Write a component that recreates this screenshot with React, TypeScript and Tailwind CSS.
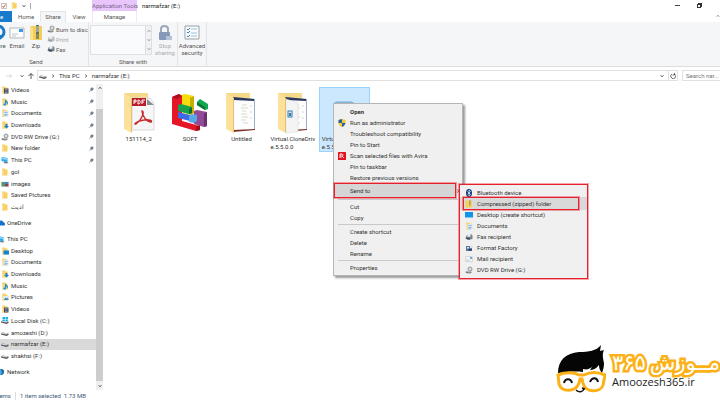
import type { ReactNode } from "react";

type IconName =
  | "folder" | "video" | "music" | "doc" | "download" | "dvd" | "pc" | "images"
  | "cloud" | "desktop" | "pictures" | "disk" | "drive" | "network"
  | "bluetooth" | "zip" | "screen" | "fax" | "factory" | "mail" | "shield" | "avira";

const folderBase = (
  <>
    <path d="M2 1h6l1 2h4v12H2z" fill="#f8cf62" />
    <path d="M2 2l3 1v12H2z" fill="#fbe09a" />
  </>
);

const discDrive = (
  <>
    <ellipse cx="10" cy="6" rx="5" ry="5" fill="#a9adb0" />
    <ellipse cx="10" cy="6" rx="2" ry="2" fill="#eef0f1" />
    <path d="M1 11l7-1 6 2-4 3-8-1z" fill="#6d7174" />
    <path d="M1 11l7-1 6 2-6 1z" fill="#c3c6c8" />
  </>
);

const hardDrive = (
  <>
    <path d="M0 9l3-2 12 2v3l-4 2L0 11z" fill="#55595c" />
    <path d="M0 9l3-2 12 2-4 2z" fill="#d3d5d7" />
  </>
);

const shapes: Record<IconName, ReactNode> = {
  folder: folderBase,
  video: (<>{folderBase}<path d="M6 5h9v10H6z" fill="#454a50" /><path d="M8 6h5v3H8zM8 11h5v3H8z" fill="#7f8fb3" /></>),
  music: (<>{folderBase}<path d="M9 3c1 3 5 3 5 7 0 2-1 3-2 4 1-4-1-4-2-5v4c0 3-5 3-5 0s3-2 3-2V3z" fill="#1593e6" /></>),
  doc: (<>{folderBase}<path d="M5 4h10v11H5z" fill="#d7e6f2" /><path d="M7 7h6v1H7zM7 10h6v1H7zM7 12h4v1H7z" fill="#4d90c4" /></>),
  download: (<>{folderBase}<path d="M9 6h4v4h3l-5 5-5-5h3z" fill="#1583d8" /></>),
  dvd: discDrive,
  pc: (<><path d="M1 2l12 2v9L1 10z" fill="#2fa8ea" /><path d="M2 3l10 2v3L2 6z" fill="#8dd5fa" /><path d="M7 12l8 1-3 2-7-1z" fill="#5b6b76" /></>),
  images: (<><path d="M0 3h16v11H0z" fill="#e9edf0" /><path d="M1 4h7v9H1z" fill="#55966b" /><path d="M8 4h7v4H8z" fill="#3d83d0" /><path d="M8 8h7v5H8z" fill="#8a4550" /></>),
  cloud: <path d="M1 13c-2-4 1-6 3-6 1-5 7-5 8-1 4 0 5 5 3 7z" fill="#1273c9" />,
  desktop: (<>{folderBase}<path d="M5 7h11v8H5z" fill="#0c85d6" /></>),
  pictures: (<>{folderBase}<path d="M5 6h11v9H5z" fill="#e2eef6" /><path d="M6 13l3-4 3 2 2-2 1 5H6z" fill="#478fae" /></>),
  disk: (<>{hardDrive}<path d="M3 0h5v4H3zM9 0h5v4H9zM3 5h5v3H3zM9 5h5v3H9z" fill="#16b4ec" /></>),
  drive: hardDrive,
  network: (<><circle cx="8" cy="8" r="6" fill="#4daee3" /><path d="M6 2c4 3 5 8 1 12 6 1 10-8 5-11z" fill="#1d6fa8" /></>),
  bluetooth: (<><ellipse cx="8" cy="8" rx="6" ry="8" fill="#103c7c" /><path d="M5 5l6 6-3 3V2l3 3-6 6" stroke="#fff" fill="none" strokeWidth="1.3" /></>),
  zip: (<><path d="M1 1h13v14H1z" fill="#f7d154" /><path d="M8 1h3v10H8z" fill="#817a65" /><path d="M8 3h3M8 6h3M8 9h3" stroke="#eee" /></>),
  screen: <path d="M0 2h16v11H0z" fill="#0f94ea" />,
  fax: (<><path d="M3 5l9-3 3 3v7l-9 2-5-3z" fill="#778592" /><path d="M5 3l6-1v5l-6 1z" fill="#edf1f3" /><path d="M2 9l8 1v3l-7-1z" fill="#434d55" /></>),
  factory: (<><path d="M2 4h12v10H2z" fill="#5b7896" /><path d="M4 6h4v3H4zM10 3h5v5h-5z" fill="#d5e4ef" /><path d="M7 10h6v3H7z" fill="#233b58" /></>),
  mail: (<><path d="M1 3h14v10H1z" fill="#f5f5f4" stroke="#b9bcbe" /><path d="M10 4h4v4h-4z" fill="#64aade" /><path d="M3 10h6" stroke="#999" /></>),
  shield: (<><path d="M8 0l7 2v5c0 5-4 8-7 9-3-1-7-4-7-9V2z" fill="#f7c52d" /><path d="M8 0v8H1V2zM8 8h7c-1 5-5 7-7 8z" fill="#2264a8" /></>),
  avira: (<><rect width="16" height="16" rx="1" fill="#e3131e" /><path d="M4 12V4h2v8M6 4c5-1 5 4 2 4l4 4" stroke="#fff" strokeWidth="1.7" fill="none" /></>),
};

function Icon({ name, className = "size-2" }: { name: IconName; className?: string }) {
  return (
    <svg viewBox="0 0 16 16" aria-hidden="true" className={`shrink-0 ${className}`}>
      {shapes[name]}
    </svg>
  );
}

function Chevron({ className = "" }: { className?: string }) {
  return (
    <svg viewBox="0 0 8 8" aria-hidden="true" className={`size-1 shrink-0 ${className}`}>
      <path d="M1 2l3 4 3-4" fill="none" stroke="currentColor" strokeWidth="1.3" />
    </svg>
  );
}

function Pin() {
  return (
    <svg viewBox="0 0 12 12" aria-hidden="true" className="ml-auto size-[5px] shrink-0 text-[#74828f]">
      <path d="M7 0l5 5-2 1-2 3-1 1-5-5 1-1 3-2z" fill="currentColor" />
      <path d="M0 12l5-5" stroke="currentColor" strokeWidth="1.5" />
    </svg>
  );
}

type Place = { label: string; icon: IconName; pinned?: boolean; active?: boolean };

const quickAccess: Place[] = [
  { label: "Videos", icon: "video", pinned: true },
  { label: "Music", icon: "music", pinned: true },
  { label: "Documents", icon: "doc", pinned: true },
  { label: "Downloads", icon: "download", pinned: true },
  { label: "DVD RW Drive (G:)", icon: "dvd", pinned: true },
  { label: "New folder", icon: "folder", pinned: true },
  { label: "This PC", icon: "pc", pinned: true },
  { label: "gol", icon: "folder" },
  { label: "images", icon: "images" },
  { label: "Saved Pictures", icon: "folder" },
  { label: "ادیت", icon: "folder" },
];

const drives: Place[] = [
  { label: "Desktop", icon: "desktop" },
  { label: "Documents", icon: "doc" },
  { label: "Downloads", icon: "download" },
  { label: "Music", icon: "music" },
  { label: "Pictures", icon: "pictures" },
  { label: "Videos", icon: "video" },
  { label: "Local Disk (C:)", icon: "disk" },
  { label: "amozeshi (D:)", icon: "drive" },
  { label: "narmafzar (E:)", icon: "drive", active: true },
  { label: "shakhsi (F:)", icon: "drive" },
];

function PlaceLink({ place, root = false }: { place: Place; root?: boolean }) {
  return (
    <a
      href="#"
      className={`flex items-center gap-[2px] pr-[2px] ${root ? "-ml-[3px]" : "pl-[1px]"} ${place.active ? "bg-[#d9d9d9]" : ""}`}
    >
      <Icon name={place.icon} />
      <span>{place.label}</span>
      {place.pinned && <Pin />}
    </a>
  );
}

function Sidebar() {
  return (
    <nav aria-label="Places" className="flex w-24 shrink-0 flex-col gap-1">
      <div className="grid h-[129px] auto-rows-fr">
        {quickAccess.map((p) => <PlaceLink key={p.label} place={p} />)}
      </div>
      <div className="grid h-3"><PlaceLink root place={{ label: "OneDrive", icon: "cloud" }} /></div>
      <div className="grid h-[129px] auto-rows-fr">
        <PlaceLink root place={{ label: "This PC", icon: "pc" }} />
        {drives.map((p) => <PlaceLink key={p.label} place={p} />)}
      </div>
      <div className="grid h-3"><PlaceLink root place={{ label: "Network", icon: "network" }} /></div>
    </nav>
  );
}

function BigButton({ children, label, className = "" }: { children: ReactNode; label: string; className?: string }) {
  return (
    <button className={`flex shrink-0 flex-col items-center gap-[1px] text-center ${className}`}>
      {children}
      <span>{label}</span>
    </button>
  );
}

function Ribbon() {
  return (
    <div className="flex h-[45px] shrink-0 border-b border-[#dcdddf] bg-[#f5f6f7] leading-[7px] text-[#555]">
      <section className="flex w-[89px] flex-col justify-between border-r border-[#e2e3e4] pt-[3px]">
        <div className="flex">
          <BigButton label="Share" className="-ml-3 w-5">
            <svg viewBox="0 0 16 16" className="size-4" aria-hidden="true">
              <circle cx="8" cy="7" r="6" fill="none" stroke="#1979ca" strokeWidth="3" />
              <path d="M8 10h6l-4 5H5z" fill="#1979ca" />
            </svg>
          </BigButton>
          <BigButton label="Email" className="w-[18px]">
            <svg viewBox="0 0 16 16" className="size-4" aria-hidden="true">
              <path d="M1 3h14v10H1z" fill="#fbfcfc" stroke="#b4babf" />
              <path d="M10 4h4v3h-4z" fill="#4299dc" />
              <path d="M3 9h6M3 11h4" stroke="#c2c7ca" />
            </svg>
          </BigButton>
          <BigButton label="Zip" className="w-5">
            <svg viewBox="0 0 16 16" className="size-4" aria-hidden="true">
              <path d="M2 1h12v14H2z" fill="#f3cf57" />
              <path d="M2 1l3 2v12H2z" fill="#fae08d" />
              <path d="M8 0h3v9H8z" fill="#69716f" />
              <path d="M8 2h3M8 4h3M8 6h3" stroke="#d3d7d4" />
              <path d="M8 9h3v5H8z" fill="#8b875e" />
            </svg>
          </BigButton>
          <div className="ml-[1px] flex flex-col gap-[2px] whitespace-nowrap">
            <button className="flex h-2 items-center gap-[1px]"><Icon name="dvd" /><span>Burn to disc</span></button>
            <button disabled className="flex h-2 items-center gap-[1px] text-[#aaa]"><Icon name="fax" className="size-2 opacity-50" /><span>Print</span></button>
            <button className="flex h-2 items-center gap-[1px]"><Icon name="fax" /><span>Fax</span></button>
          </div>
        </div>
        <h2 className="pr-4 pb-[1px] text-center">Send</h2>
      </section>
      <section className="flex w-[89px] flex-col justify-between border-r border-[#e2e3e4] pt-[3px]">
        <div className="flex gap-[1px] pl-[1px]">
          <div className="flex h-[30px] w-[63px] justify-end border border-[#dfe0e2] bg-[#fafbfc]">
            <div className="flex w-[6px] flex-col items-center justify-around border-l border-[#dfe0e2] bg-[#f0f1f2] text-[#8a8f94]">
              <Chevron className="rotate-180" /><Chevron /><Chevron />
            </div>
          </div>
          <BigButton label="Stop sharing" className="w-6 text-[#aaa]">
            <svg viewBox="0 0 16 16" className="size-4" aria-hidden="true">
              <path d="M4 8V4c0-4 7-4 7 0v4" fill="none" stroke="#9ba7bb" strokeWidth="2" />
              <rect x="2" y="7" width="11" height="8" rx="1" fill="#8799b8" />
              <path d="M9 11h6v4H9z" fill="#b6c3d6" />
            </svg>
          </BigButton>
        </div>
        <h2 className="pb-[1px] text-center">Share with</h2>
      </section>
      <section className="flex w-[29px] items-start border-r border-[#e2e3e4] pt-[3px]">
        <BigButton label="Advanced security" className="w-7">
          <svg viewBox="0 0 16 16" className="size-4" aria-hidden="true">
            <path d="M1 1h14v13H1z" fill="#fafafa" stroke="#9ba0a5" />
            <path d="M3 4l1 1 2-2M3 7l1 1 2-2M3 11l1 1 2-2" fill="none" stroke="#2686ca" />
            <path d="M7 4h6M7 8h6M7 11h6" stroke="#9cc2de" />
          </svg>
        </BigButton>
      </section>
    </div>
  );
}

function Header() {
  return (
    <header className="flex h-[22px] shrink-0 justify-between">
      <div className="flex">
        <div className="flex w-[92px] flex-col">
          <div className="flex h-[11px] items-center gap-1 pl-[1px]">
            <svg viewBox="0 0 12 12" className="size-[6px]" aria-hidden="true">
              <path d="M1 1h10v10H1z" fill="#fff" stroke="#888" /><path d="M3 6l2 3 4-6" fill="none" stroke="#dc552e" strokeWidth="2" />
            </svg>
            <Icon name="folder" className="size-[7px]" />
            <Chevron />
            <span className="h-[6px] border-l border-[#aaa]" />
          </div>
          <div className="flex h-[11px] text-[#555]">
            <button className="w-3 bg-[#1979ca] text-left text-white" aria-label="File">e</button>
            <button className="w-7">Home</button>
            <button className="w-[26px] border-x border-t border-[#e3e4e6] bg-[#f5f6f7]">Share</button>
            <button className="w-[26px]">View</button>
          </div>
        </div>
        <div className="w-[45px] text-center text-[#555]">
          <div className="h-[11px] bg-[#e8c6fb] leading-[11px] whitespace-nowrap text-[#79638a]">Application Tools</div>
          <button className="h-[11px] w-full border-x border-[#f3e4fb]">Manage</button>
        </div>
        <h1 className="pl-[5px] leading-[11px] text-[#222]">narmafzar (E:)</h1>
      </div>
      <div className="flex flex-col justify-between">
        <div className="flex h-[11px] items-center gap-[17px] pr-[18px]">
          <button aria-label="Minimize" className="w-[5px] border-t border-[#444]" />
          <button aria-label="Restore">
            <svg viewBox="0 0 5 5" className="size-[5px]" aria-hidden="true"><path d="M0 1h4v4H0zM1 0h4v4H4V1H1z" fill="#333" /><path d="M1 2h2v2H1z" fill="#fff" /></svg>
          </button>
        </div>
        <Chevron className="mb-1 rotate-180 self-end text-[#888]" />
      </div>
    </header>
  );
}

function AddressBar() {
  return (
    <div className="flex h-[17px] shrink-0 items-center text-[#444]">
      <div className="flex w-[37px] items-center gap-2 pl-[6px]">
        <svg viewBox="0 0 12 12" className="size-[6px] shrink-0 text-[#ccc]" aria-hidden="true"><path d="M0 6h11M7 2l4 4-4 4" fill="none" stroke="currentColor" strokeWidth="1.5" /></svg>
        <Chevron className="-mr-1" />
        <svg viewBox="0 0 12 12" className="size-[6px] shrink-0" aria-hidden="true"><path d="M6 12V1M1 6l5-5 5 5" fill="none" stroke="currentColor" strokeWidth="1.8" /></svg>
      </div>
      <div className="flex h-[11px] flex-1 items-center gap-1 border border-[#e0e0e0] pl-[1px] text-[#333]">
        <Icon name="drive" />
        <Chevron className="-rotate-90" />
        <a href="#">This PC</a>
        <Chevron className="-rotate-90" />
        <a href="#">narmafzar (E:)</a>
        <Chevron className="ml-auto" />
        <button aria-label="Refresh" className="flex h-full w-[9px] items-center justify-center border-l border-[#e0e0e0]">
          <svg viewBox="0 0 12 12" className="size-[6px]" aria-hidden="true"><path d="M9 2a5 5 0 1 1-5 0M9 0v4H5" fill="none" stroke="currentColor" strokeWidth="1.5" /></svg>
        </button>
      </div>
      <input aria-label="Search narmafzar" placeholder="Search nar..." className="ml-1 h-[11px] w-[38px] border border-r-0 border-[#e0e0e0] pl-[3px] placeholder:text-[#777]" />
    </div>
  );
}

function FolderArt({ children }: { children: ReactNode }) {
  return (
    <svg viewBox="0 0 32 42" className="h-[42px] w-8" aria-hidden="true">
      <path d="M1 1h24v36H1z" fill="#f5d98a" />
      {children}
      <path d="M1 1l8 5v35l-8-4z" fill="#fde09a" />
      <path d="M8 6l1 1v34l-1-1z" fill="#e5c26a" />
    </svg>
  );
}

const windowPage = (
  <>
    <path d="M8 6l22 1v31l-22 1z" fill="#fdfdfd" />
    <path d="M8 5l22 2v2L8 8z" fill="#28385c" />
    <path d="M29 7h1v31h-1z" fill="#9bb0c6" />
    <path d="M8 38l22-1v1l-22 2z" fill="#7c342d" />
    <path d="M17 13h5M16 16h7M17 19h4M16 22h6M17 25h6M16 28h5M18 31h5M25 14h2M25 20h2M25 26h2" stroke="#d4dcd2" />
  </>
);

const files: { name: ReactNode; art: ReactNode; selected?: boolean; wide?: boolean }[] = [
  {
    name: "151114_2",
    art: (
      <FolderArt>
        <path d="M9 6h18l4 5v27H9z" fill="#f6f6f6" stroke="#d9d9d9" />
        <path d="M9 6h14v8H9z" fill="#b91f2b" />
        <path d="M24 7l7 6h-7z" fill="#8b8e91" />
        <path d="M11 12V8h2v2h-2M15 12V8c3 0 3 4 0 4M19 12V8h3M19 10h2" fill="none" stroke="#fff" />
        <path d="M19 19c3 0 0 9-6 13-3 1 0-3 8-4 5-1 9 1 7 2-4 0-9-6-9-11z" fill="none" stroke="#c5292e" strokeWidth="1.4" />
      </FolderArt>
    ),
  },
  {
    name: "SOFT",
    art: (
      <svg viewBox="0 0 38 42" className="h-[42px] w-[38px]" aria-hidden="true">
        <path d="M10 3l4-1 9 2v17l-4 2-9-3z" fill="#f6dc0c" />
        <path d="M19 6l4-2v17l-4 2z" fill="#c9ae04" />
        <path d="M23 19l3-1 10 2v14l-3 1-10-3z" fill="#934b98" />
        <path d="M33 22l3-2v14l-3 1z" fill="#6b2f74" />
        <path d="M1 5l7-3 3 2v25l18 5v4l-4 1L1 32z" fill="#e51626" />
        <path d="M1 5l7-3 3 2-5 3z" fill="#a8121d" />
        <path d="M25 35l4-2v5l-4 1z" fill="#a50d1b" />
        <path d="M7 13l3-1 11 3v6l-3 1-11-3z" fill="#18a24d" />
        <path d="M18 17l3-2v6l-3 1z" fill="#087034" />
        <path d="M7 20l12 3v6L7 26z" fill="#3f6ae8" />
        <path d="M18 24l3-2 5 1v6l-3 2-5-1z" fill="#56a8e6" />
        <path d="M26 10l3-3 8 5v5l-3 1-8-5z" fill="#12a84f" />
        <path d="M26 10l8 5v3l-8-5z" fill="#087335" />
      </svg>
    ),
  },
  { name: "Untitled", art: <FolderArt>{windowPage}</FolderArt> },
  {
    name: <>Virtual.CloneDriv<wbr />e.5.5.0.0</>,
    wide: true,
    art: (
      <FolderArt>
        {windowPage}
        <path d="M9 7l12 4v29l-12 1z" fill="#f4f4f4" stroke="#d6d6d6" strokeWidth=".5" />
        <rect x="11" y="19" width="4" height="6" fill="#d7eaf5" stroke="#367eae" />
        <path d="M12 21h2v3h-2z" fill="#367eae" />
      </FolderArt>
    ),
  },
  {
    name: <>Virtual.CloneDriv<wbr />e.5.5.0.0</>,
    wide: true,
    selected: true,
    art: (
      <svg viewBox="0 0 32 42" className="h-[42px] w-8" aria-hidden="true">
        <rect x="6" y="10" width="20" height="24" rx="3" fill="#8eb9db" stroke="#76a8ce" />
        <rect x="11" y="14" width="10" height="14" fill="#d9ecf9" />
      </svg>
    ),
  },
];

function Files() {
  return (
    <main className="min-w-0 flex-1 pt-[3px] pl-[10px]">
      <div className="grid w-[257px] grid-cols-5">
        {files.map((f, i) => (
          <button
            key={i}
            className={`flex h-[65px] flex-col items-center gap-[1px] border pt-1 ${f.selected ? "border-[#99d1ff] bg-[#cce8ff]" : "border-transparent"}`}
          >
            {f.art}
            <span className={f.wide ? "w-[45px] text-left leading-2" : "leading-2"}>{f.name}</span>
          </button>
        ))}
      </div>
    </main>
  );
}

function MenuItem({ label, icon, className = "" }: { label: string; icon?: IconName; className?: string }) {
  return (
    <button role="menuitem" className={`flex h-[11px] w-full items-center gap-1 pl-1 text-left whitespace-nowrap ${className}`}>
      {icon ? <Icon name={icon} /> : <span className="w-2" />}
      <span>{label}</span>
    </button>
  );
}

function ContextMenu() {
  const rule = <hr className="mx-1 my-[1px] border-[#c9c9c9]" />;
  return (
    <div role="menu" className="absolute top-[103px] left-[333px] w-[130px] border border-[#b5b5b5] bg-[#f0f0f0] py-[2px] shadow-[2px_2px_2px_#0006]">
      <MenuItem label="Open" className="font-bold" />
      <MenuItem label="Run as administrator" icon="shield" />
      <MenuItem label="Troubleshoot compatibility" />
      <MenuItem label="Pin to Start" />
      <MenuItem label="Scan selected files with Avira" icon="avira" />
      <MenuItem label="Pin to taskbar" />
      <MenuItem label="Restore previous versions" />
      <div className="flex items-center">
        <button role="menuitem" aria-haspopup="menu" className="h-[15px] w-[122px] border border-[#e8202c] bg-[#d5d5d5] pl-[15px] text-left outline outline-[#e8202c]/40">Send to</button>
        <Chevron className="-rotate-90" />
      </div>
      {rule}
      <MenuItem label="Cut" />
      <MenuItem label="Copy" />
      {rule}
      <MenuItem label="Create shortcut" />
      <MenuItem label="Delete" />
      <MenuItem label="Rename" />
      {rule}
      <MenuItem label="Properties" />
    </div>
  );
}

function SendToMenu() {
  return (
    <div role="menu" className="absolute top-[184px] left-[459px] w-[129px] border border-[#e8202c] bg-[#f0f0f0] pt-[2px] pb-[3px] outline outline-[#e8202c]/40">
      <MenuItem label="Bluetooth device" icon="bluetooth" className="pl-[5px]" />
      <div className="-my-[1px] bg-[#d9d9d9] pl-[3px]">
        <button role="menuitem" className="flex h-[13px] w-[116px] items-center gap-1 border border-[#e8202c] pl-[1px] whitespace-nowrap outline outline-[#e8202c]/40">
          <Icon name="zip" /><span>Compressed (zipped) folder</span>
        </button>
      </div>
      <MenuItem label="Desktop (create shortcut)" icon="screen" className="pl-[5px]" />
      <MenuItem label="Documents" icon="doc" className="pl-[5px]" />
      <MenuItem label="Fax recipient" icon="fax" className="pl-[5px]" />
      <MenuItem label="Format Factory" icon="factory" className="pl-[5px]" />
      <MenuItem label="Mail recipient" icon="mail" className="pl-[5px]" />
      <MenuItem label="DVD RW Drive (G:)" icon="dvd" className="pl-[5px]" />
    </div>
  );
}

function Brand() {
  return (
    <div className="absolute right-0 bottom-0 flex h-[60px] w-[164px] items-start gap-[6px] overflow-hidden">
      <svg viewBox="0 0 50 52" className="mt-1 h-[52px] w-[50px] shrink-0" aria-hidden="true">
        <path d="M2 29C2 16 10 9 23 8c10 0 17-1 22-7l-1 6 4-1c-2 4-1 8 0 13 0 5-1 7-2 10-2-2-3-5-3-8-3 4-6 5-9 5l2-3c-3 2-5 3-9 2v3c-9-1-16 0-25 1z" fill="#050505" />
        <path d="M2 31c7-3 16-3 21 0h5c6-3 14-3 21 0l-2 10c-2 8-18 8-20-2l-1-4h-2l-1 4c-3 9-17 10-20 1z" fill="#fff" stroke="#fbb117" strokeWidth="3" />
        <path d="M8 39c1-5 7-5 8 0M34 38c2-5 7-5 8 0" fill="none" stroke="#111" strokeWidth="2" />
        <path d="M20 46c3 3 7 2 8-1M26 44l3 1" fill="none" stroke="#111" strokeWidth="1.4" />
      </svg>
      <div className="w-[108px] shrink-0 pt-3">
        <div dir="rtl" className="flex h-[22px] items-center justify-between font-['DejaVu_Sans',sans-serif] text-[21px] leading-[22px] whitespace-nowrap text-white [-webkit-text-stroke:5px_#fbb117] [paint-order:stroke_fill]">
          <span>مــوزش</span><span>۳۶۵</span>
        </div>
        <div className="font-['Open_Sans',sans-serif] text-[11px] leading-4 text-[#222]">Amoozesh365.ir</div>
      </div>
    </div>
  );
}

export default function App() {
  return (
    <div className="relative flex h-screen flex-col overflow-hidden bg-white font-['Roboto','Noto_Sans',sans-serif] text-[6px] leading-[8px] text-[#333]">
      <Header />
      <Ribbon />
      <AddressBar />
      <div className="flex min-h-0 flex-1">
        <Sidebar />
        <div className="flex w-[7px] shrink-0 flex-col items-center bg-[#f0f0f0] py-[2px] text-[#444]">
          <Chevron className="mb-[19px] rotate-180" />
          <div className="w-full flex-1 bg-[#cdcdcd]" />
          <Chevron className="mt-[3px]" />
        </div>
        <Files />
      </div>
      <footer className="flex h-[10px] shrink-0 items-center pt-[2px] text-[#41587a]">
        <span className="-ml-1 w-[20px] border-r border-[#ddd]">items</span>
        <span className="pl-1">1 item selected&nbsp; 1.73 MB</span>
      </footer>
      <ContextMenu />
      <SendToMenu />
      <Brand />
    </div>
  );
}
